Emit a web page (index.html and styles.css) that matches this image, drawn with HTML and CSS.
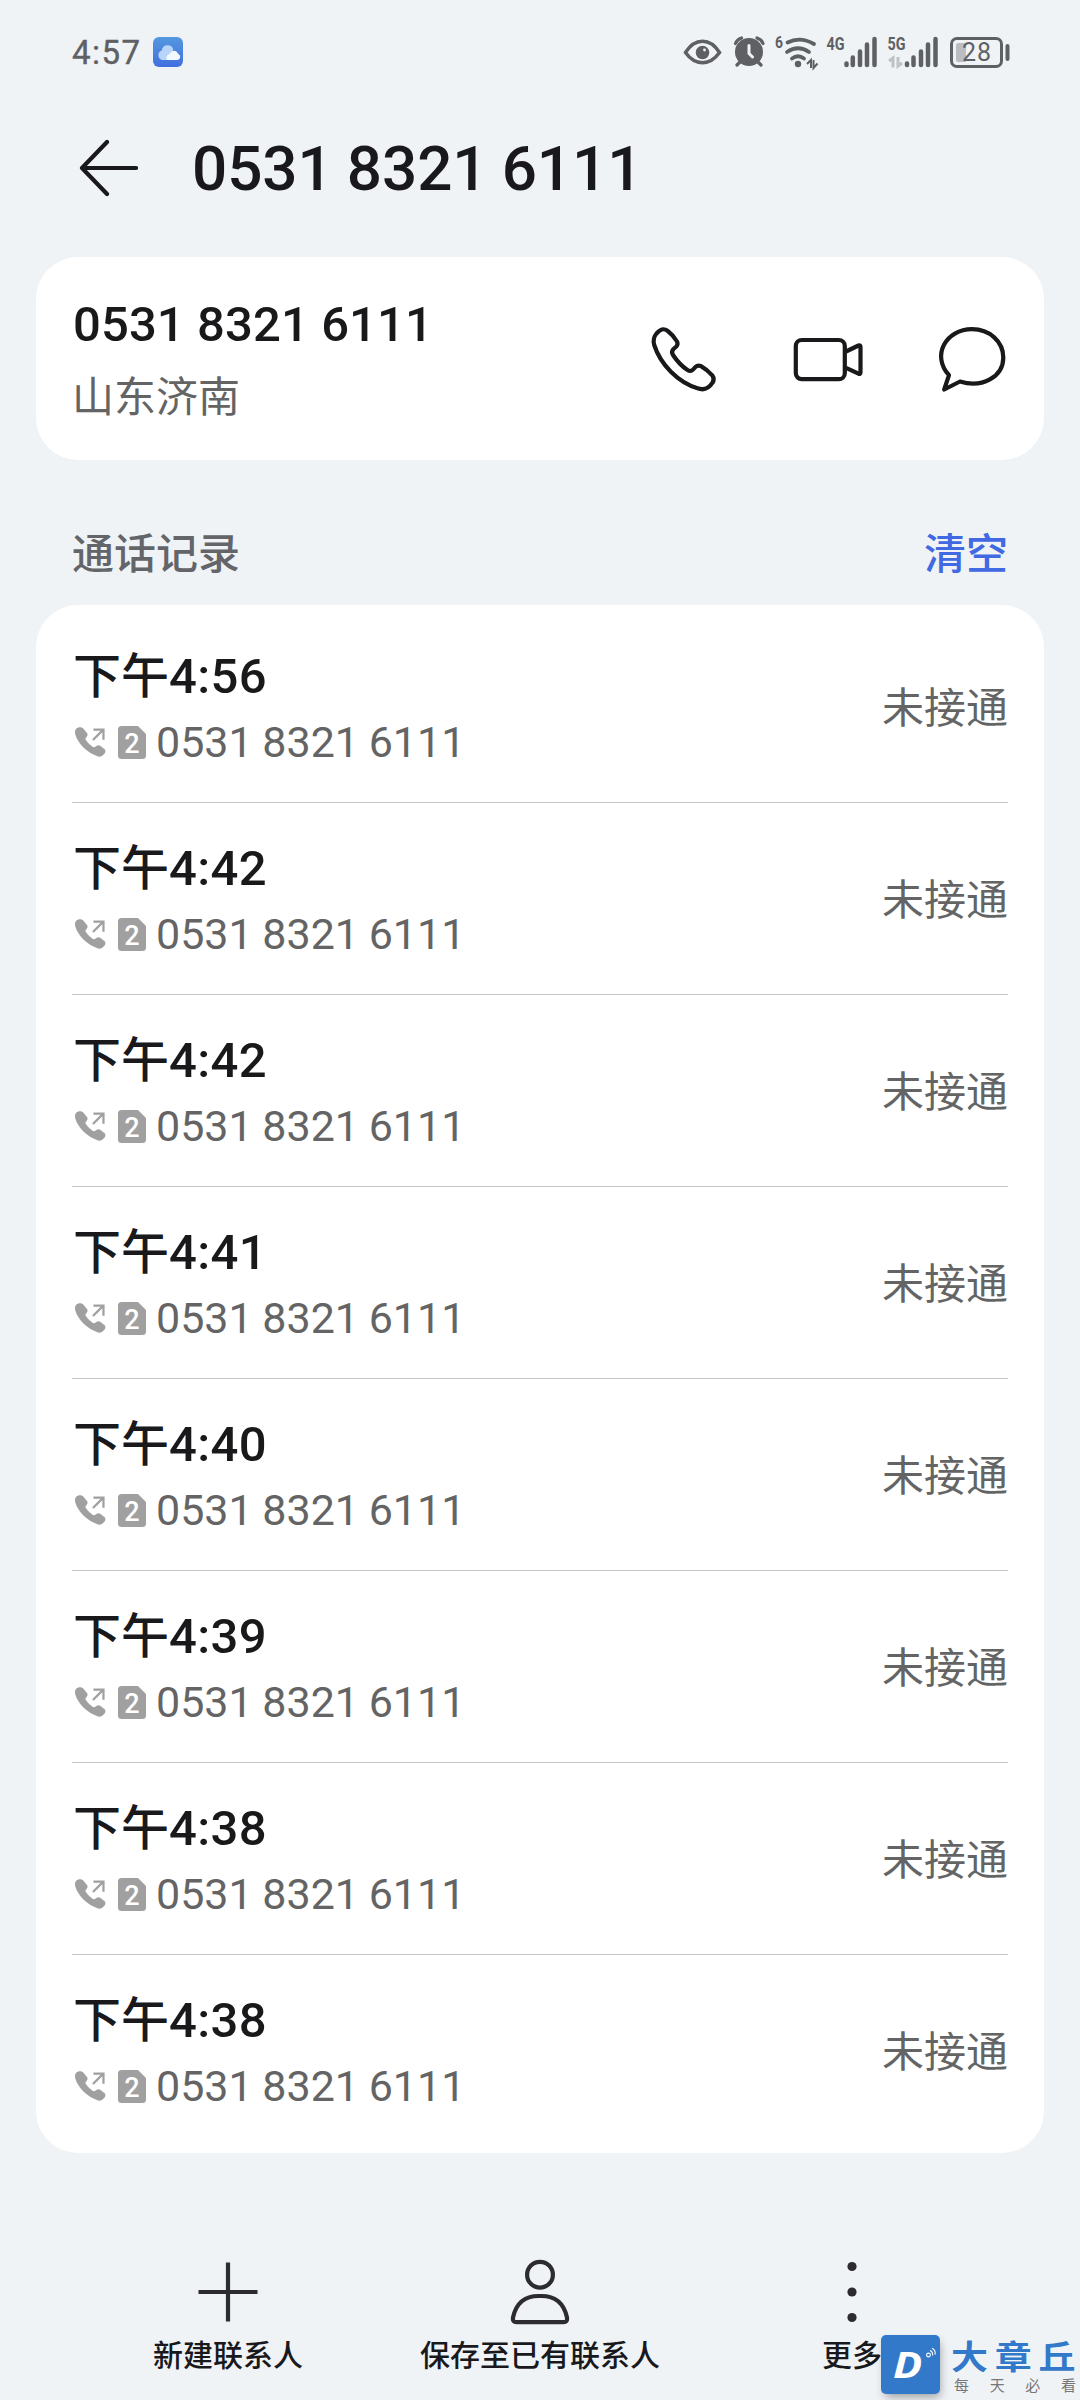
FILE: index.html
```html
<!DOCTYPE html>
<html lang="zh-CN">
<head>
<meta charset="utf-8">
<title>0531 8321 6111</title>
<link rel="stylesheet" href="styles.css">
</head>
<body>
<svg class="defs" width="0" height="0" aria-hidden="true">
  <symbol id="outgoing" viewBox="0 0 32 32">
    <path fill="#a0a0a0" d="M1.200 2.200C3.400.400 6.400.200 8 1.500l4.400 5.300c.9 1.200.7 2.600-.3 3.700-1.700 1.900-1.500 2.700-.3 4.300 1.800 2.500 3.800 4.400 6.200 6 1.300.8 2.300.7 3.700-.5 1.400-1.200 3-1.300 4.300-.4l4.600 3.600c1.400 1.400.9 3.400-.6 5-2.200 2.700-4.300 3.200-6.900 2.200C12.600 26.900 3.600 18.600.300 8.300-.300 5.900-.200 3.600 1.200 2.200Z"/>
    <path fill="none" stroke="#a0a0a0" stroke-width="2.300" d="M18.500 14 29 3.500M19 3.200h10.400v10.600"/>
  </symbol>
  <symbol id="sim" viewBox="0 0 28 33">
    <path fill="#a0a0a0" d="M3.500 0H20l8 8v21.500a3.500 3.500 0 0 1-3.500 3.500h-21A3.500 3.500 0 0 1 0 29.500v-26A3.500 3.500 0 0 1 3.500 0Z"/>
  </symbol>
</svg>

<header class="status">
  <span class="clock">4:57</span>
  <svg class="cloud" viewBox="0 0 30 30"><defs><linearGradient id="sky" x2="0" y2="1"><stop stop-color="#5598df"/><stop offset="1" stop-color="#416fdf"/></linearGradient></defs><rect width="30" height="30" rx="6" fill="url(#sky)"/><path fill="#b7d5fb" d="M9 23a5 5 0 0 1-.3-9.500A6 6 0 0 1 20 11.500L19 23Z"/><path fill="#f3f9ff" d="M14 23c-1.500-3 .500-6 3-6.300 1-3.500 6.500-4.200 8 0 3.500 1.500 2.500 6.300-1 6.300Z"/></svg>
  <svg class="indicators" viewBox="680 30 332 44">
    <path fill="none" stroke="#5f6063" stroke-width="3.500" d="M685.500 52.500C695 37.500 710 37.500 719.500 52.500 710 66 695 66 685.500 52.500Z"/>
    <circle cx="702.500" cy="52.500" r="6.800" fill="#5f6063"/><circle cx="704.500" cy="50" r="1.400" fill="#f0f3f6"/>
    <circle cx="749" cy="52" r="14" fill="#5f6063"/>
    <g fill="none" stroke="#5f6063" stroke-width="3.200" stroke-linecap="round">
      <path d="M735.500 43.500q1.500-4 6-5.500M757 38q4.500 1.500 6 5.500M740 62l-3 3M758 62l3 3"/>
      <path stroke="#f0f3f6" stroke-width="3" d="M749 45.500v8l3.500 3.500"/>
      <path stroke-width="3.800" d="M787.500 42.500q13-6.500 26.500 1.500M787 52q11-7.500 22 0M792 58.500q6-4.500 12 0"/>
    </g>
    <circle cx="798" cy="64" r="3.200" fill="#5f6063"/>
    <path fill="none" stroke="#5f6063" stroke-width="2" d="M807 64l4-4v8M813.500 60v8l4-4.500"/>
    <g fill="none" stroke="#5f6063" stroke-width="4.500" stroke-linecap="round"><path d="M846.500 63.500v1.500M852.800 57.500V65M860 51.500V65M867 44.500V65M874.500 39V65M907 63.500v1.500M913.500 57.500V65M921 51.500V65M928 44.500V65M935.500 39V65"/></g>
    <path fill="none" stroke="#bfc1c4" stroke-width="3" d="M889 61l4-3v9.500M898 57v9l4-3"/>
    <g fill="#5f6063" class="glyphs"><text x="775" y="48" font-size="17" textLength="8" lengthAdjust="spacingAndGlyphs">6</text><text x="826.500" y="50" font-size="18" textLength="18" lengthAdjust="spacingAndGlyphs">4G</text><text x="887.500" y="50" font-size="18" textLength="18" lengthAdjust="spacingAndGlyphs">5G</text></g>
    <rect x="951.500" y="38.500" width="50" height="28" rx="5.500" fill="none" stroke="#5f6063" stroke-width="3"/>
    <path fill="#bcbdc0" d="M958 43h8v19h-8a2 2 0 0 1-2-2V45a2 2 0 0 1 2-2Z"/>
    <text x="962" y="61" font-size="25" fill="#5f6063" class="level" textLength="29">28</text>
    <rect x="1005.500" y="44" width="4" height="17" rx="2" fill="#5f6063"/>
  </svg>
</header>

<div class="titlebar">
  <svg class="back" viewBox="0 0 60 60"><path fill="none" stroke="#19191d" stroke-width="4.200" stroke-linecap="round" stroke-linejoin="round" d="M29 4 4 30l25 26M4.500 30H58"/></svg>
  <h1>0531 8321 6111</h1>
</div>

<main>
  <section class="contact">
    <div class="who">
      <div class="phone">0531 8321 6111</div>
      <div class="place">山东济南</div>
    </div>
    <div class="actions">
      <svg viewBox="0 0 72 72"><path d="M8.500 10.500C12.500 6 15.500 5 19.500 7.800 23.500 10.800 26.500 14.500 29 18.500c1 2 .7 3.500-.7 5L25.500 26c-2 2-2 3.500-.5 6C29 38 34 43.500 39.500 47c2.400 1.500 3.800 1.400 5.500-.4l2.500-2.700c1.700-1.700 3.200-1.900 5.500-.7 4.500 2.500 8 5.600 11.500 9.500 1.700 2.500 1.700 4.500 0 7-3.500 5.500-8.500 8-15 5.600C30 59.500 12.500 41.500 6.200 22c-1.200-4.500-.7-8 2.300-11.500Z"/></svg>
      <svg viewBox="0 0 72 72"><rect x="3.800" y="17" width="49" height="39.200" rx="6"/><path d="m54 28.500 12.500-6q2-.8 2 1.400v25.400q0 2.200-2 1.400L54 44.800"/></svg>
      <svg viewBox="0 0 72 72"><path d="M13 52.200C-5 32.500 10 6.200 36 6.200 53.500 6.200 67.300 18.500 67.300 34.500 67.300 54 46 65.500 24 58.500L8.200 66.500Z"/></svg>
    </div>
  </section>

  <div class="section-head"><h2>通话记录</h2><a>清空</a></div>

  <ul class="log">
    <li><div><div class="time"><span>下午</span>4:56</div><div class="line"><svg class="out"><use href="#outgoing"/></svg><span class="sim"><svg><use href="#sim"/></svg><b>2</b></span><span class="num">0531 8321 6111</span></div></div><span class="state">未接通</span></li>
    <li><div><div class="time"><span>下午</span>4:42</div><div class="line"><svg class="out"><use href="#outgoing"/></svg><span class="sim"><svg><use href="#sim"/></svg><b>2</b></span><span class="num">0531 8321 6111</span></div></div><span class="state">未接通</span></li>
    <li><div><div class="time"><span>下午</span>4:42</div><div class="line"><svg class="out"><use href="#outgoing"/></svg><span class="sim"><svg><use href="#sim"/></svg><b>2</b></span><span class="num">0531 8321 6111</span></div></div><span class="state">未接通</span></li>
    <li><div><div class="time"><span>下午</span>4:41</div><div class="line"><svg class="out"><use href="#outgoing"/></svg><span class="sim"><svg><use href="#sim"/></svg><b>2</b></span><span class="num">0531 8321 6111</span></div></div><span class="state">未接通</span></li>
    <li><div><div class="time"><span>下午</span>4:40</div><div class="line"><svg class="out"><use href="#outgoing"/></svg><span class="sim"><svg><use href="#sim"/></svg><b>2</b></span><span class="num">0531 8321 6111</span></div></div><span class="state">未接通</span></li>
    <li><div><div class="time"><span>下午</span>4:39</div><div class="line"><svg class="out"><use href="#outgoing"/></svg><span class="sim"><svg><use href="#sim"/></svg><b>2</b></span><span class="num">0531 8321 6111</span></div></div><span class="state">未接通</span></li>
    <li><div><div class="time"><span>下午</span>4:38</div><div class="line"><svg class="out"><use href="#outgoing"/></svg><span class="sim"><svg><use href="#sim"/></svg><b>2</b></span><span class="num">0531 8321 6111</span></div></div><span class="state">未接通</span></li>
    <li><div><div class="time"><span>下午</span>4:38</div><div class="line"><svg class="out"><use href="#outgoing"/></svg><span class="sim"><svg><use href="#sim"/></svg><b>2</b></span><span class="num">0531 8321 6111</span></div></div><span class="state">未接通</span></li>
  </ul>
</main>

<nav class="toolbar">
  <div><svg viewBox="0 0 72 72"><path d="M6.500 36h59M36 6.500v59"/></svg><span>新建联系人</span></div>
  <div><svg viewBox="0 0 72 72"><circle cx="36" cy="18.700" r="12.900"/><path d="M36 40c15-.5 24 7.500 27 21.500.6 3-.7 4.700-3.500 4.700h-47c-2.800 0-4.100-1.700-3.500-4.700C12 47.500 21 39.500 36 40Z"/></svg><span>保存至已有联系人</span></div>
  <div><svg viewBox="0 0 72 72"><g fill="#2c2b30" stroke="none"><circle cx="36" cy="10.500" r="4.600"/><circle cx="36" cy="36" r="4.600"/><circle cx="36" cy="61.500" r="4.600"/></g></svg><span>更多</span></div>
</nav>

<div class="badge">
  <div class="logo"><b>D</b><svg viewBox="0 0 12 12"><g fill="none" stroke="#fff" stroke-width="1.100"><circle cx="3.500" cy="8" r="1.900"/><path d="M5 3.500q3 1.200 2.600 5M7 1.200q4 2 3 6.500"/></g></svg></div>
  <div class="brand"><strong>大章丘</strong><em><i>每</i><i>天</i><i>必</i><i>看</i></em></div>
</div>
</body>
</html>
```
FILE: styles.css
```css
* { box-sizing: border-box; margin: 0; padding: 0; }
body {
  width: 1080px; height: 2400px; overflow: hidden; position: relative;
  background: #f0f3f6; color: #19191b;
  font-family: Roboto, "Noto Sans CJK SC", sans-serif;
  display: flex; flex-direction: column;
}
.defs { position: absolute; }
svg { display: block; flex: none; }

.status { height: 104px; padding: 0 68px 0 72px; display: flex; align-items: center; color: #5f6063; }
.clock { font-size: 33px; letter-spacing: 1.5px; width: 81px; line-height: 40px; padding-top: 1px; -webkit-text-stroke: .4px; }
.cloud { width: 30px; height: 30px; }
.indicators { width: 332px; height: 44px; margin-left: auto; }
.glyphs { font-family: Roboto, sans-serif; font-weight: 700; }
.level { font-family: Roboto, sans-serif; }

.titlebar { height: 128px; display: flex; align-items: center; padding-left: 78px; }
.back { width: 60px; height: 60px; margin-right: 54px; }
h1 { font-size: 62px; font-weight: 500; line-height: 74px; padding-top: 2px; word-spacing: -1px; letter-spacing: -.1px; color: #19191d; }

main { padding: 25px 36px 0; }
.contact { height: 203px; border-radius: 42px; background: #fff; padding: 0 36px; display: flex; justify-content: space-between; align-items: center; }
.phone { font-size: 49px; font-weight: 500; letter-spacing: .1px; line-height: 60px; padding-left: 1px; margin-top: 6px; }
.place { font-size: 42px; line-height: 60px; color: #646464; margin-top: 13px; }
.actions { display: flex; gap: 72px; }
.actions svg { width: 72px; height: 72px; fill: none; stroke: #19191b; stroke-width: 4.200px; stroke-linejoin: round; }

.section-head { height: 145px; padding: 63px 36px 0; display: flex; justify-content: space-between; font-size: 42px; line-height: 64px; }
.section-head h2 { font-size: 42px; font-weight: 500; color: #646569; }
.section-head a { font-weight: 500; color: #4169e1; }

.log { list-style: none; height: 1548px; background: #fff; border-radius: 42px; padding: 6px 36px; }
.log li { height: 192px; border-bottom: 1px solid #c5c5c5; display: flex; align-items: center; justify-content: space-between; }
.log li:last-child { border-bottom-color: transparent; }
.time { font-size: 49px; font-weight: 500; line-height: 64px; letter-spacing: .4px; padding-left: 1px; margin-top: 4px; }
.time span { font-size: 48px; letter-spacing: 0; }
.line { display: flex; align-items: center; height: 60px; padding-left: 3px; margin-top: 3px; }
.out { width: 31px; height: 32px; margin-right: 12px; }
.sim { display: grid; width: 28px; height: 33px; margin-right: 10px; }
.sim svg, .sim b { grid-area: 1 / 1; }
.sim svg { width: 28px; height: 33px; }
.sim b { font-size: 27px; line-height: 37px; text-align: center; color: #fff; font-weight: 500; }
.num { font-size: 43px; line-height: 60px; color: #646464; word-spacing: -1px; }
.state { font-size: 42px; color: #646464; padding-bottom: 5px; }

.toolbar { margin-top: 103px; padding: 0 72px; display: grid; grid-template-columns: repeat(3, 1fr); }
.toolbar div { display: flex; flex-direction: column; align-items: center; }
.toolbar svg { width: 72px; height: 72px; fill: none; stroke: #2c2b30; stroke-width: 4.200px; }
.toolbar span { font-size: 30px; line-height: 44px; margin-top: 6px; font-weight: 500; color: #19191d; white-space: nowrap; }

/* corner mark lying over the toolbar */
.badge { position: absolute; left: 881px; top: 2335px; display: flex; }
.logo { position: relative; width: 59px; height: 59px; border-radius: 5px; background: #3279ca; box-shadow: 2px 5px 10px -2px rgba(0, 0, 0, .35); }
.logo b { position: absolute; left: 12px; top: 8px; font: italic 700 36px/44px "Open Sans", sans-serif; color: #fff; transform: scaleX(1.2); transform-origin: left; }
.logo svg { position: absolute; right: 3px; top: 12px; width: 12px; height: 12px; }
.brand { margin-left: 11px; width: 128px; }
.brand strong { display: block; font: 700 37px/40px "Noto Sans CJK SC", sans-serif; letter-spacing: 6.700px; color: #3279ca; white-space: nowrap; transform: scaleY(.88); transform-origin: 0 50%; }
.brand em { display: flex; justify-content: space-between; padding: 0 3px; font: normal 400 15px/20px "Noto Sans CJK SC", sans-serif; color: #777; }
.brand i { font-style: normal; }
```
